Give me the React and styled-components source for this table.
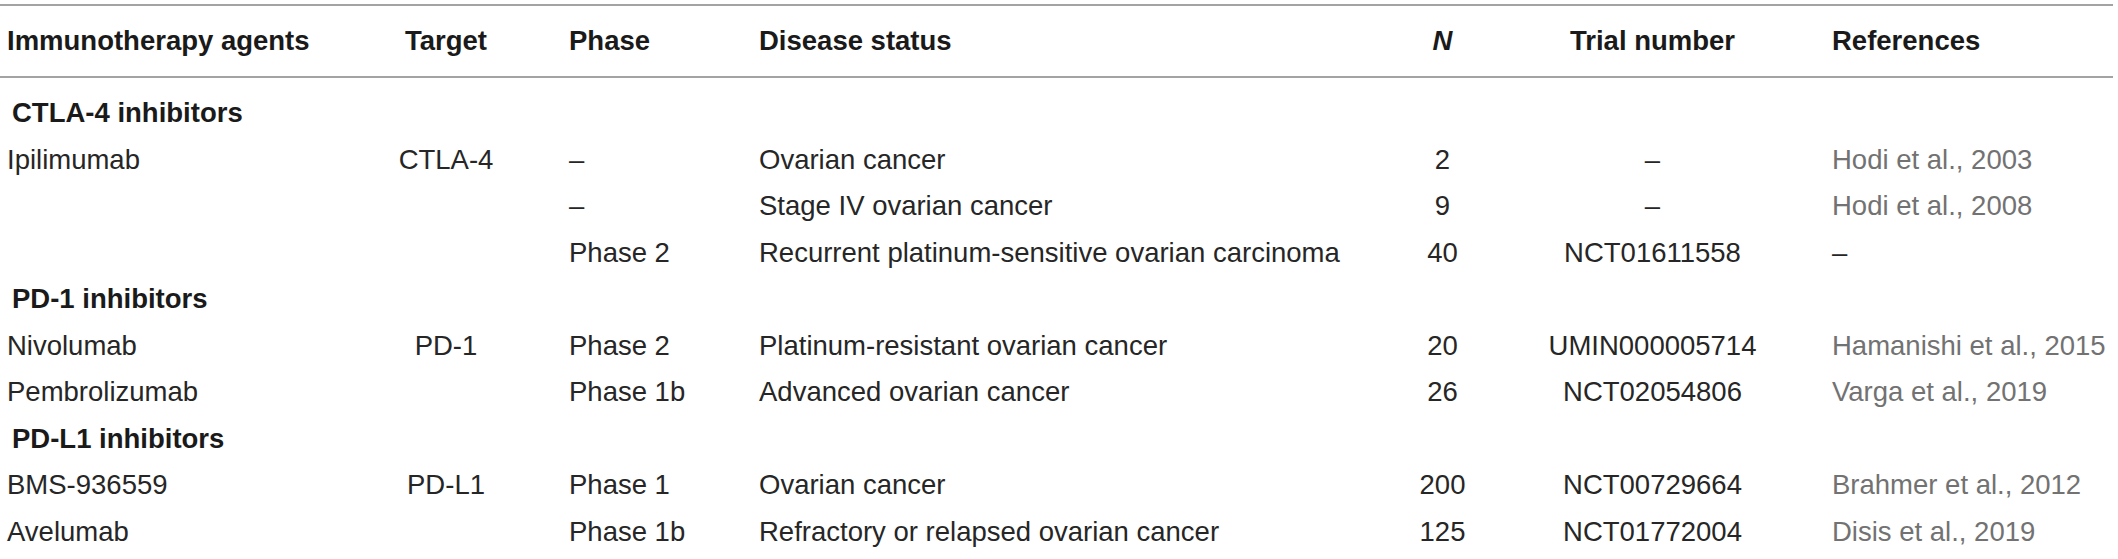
import React from 'react';
import styled, { createGlobalStyle } from 'styled-components';

const GlobalStyle = createGlobalStyle`
  html, body {
    margin: 0;
    padding: 0;
    background: #ffffff;
  }
  body {
    font-family: "Liberation Sans", Arial, Helvetica, sans-serif;
    color: #222222;
  }
`;

const COLUMNS = '330px 232px 190px 628px 125px 295px 1fr';

const Table = styled.div`
  width: 2113px;
  padding-top: 4px;
`;

const HeadRow = styled.div`
  display: grid;
  grid-template-columns: ${COLUMNS};
  align-items: center;
  height: 70px;
  border-top: 2px solid #a3a3a3;
  border-bottom: 2px solid #a3a3a3;
`;

const Body = styled.div`
  padding-top: 12px;
`;

const Row = styled.div`
  display: grid;
  grid-template-columns: ${COLUMNS};
  align-items: center;
  height: 46.5px;
`;

const HeadCell = styled.div`
  font-size: 27.5px;
  font-weight: 700;
  color: #1a1a1a;
  white-space: nowrap;
  text-align: ${p => (p.$center ? 'center' : 'left')};
  padding-left: ${p => (p.$center ? '0' : p.$indent || '7px')};
  font-style: ${p => (p.$italic ? 'italic' : 'normal')};
`;

const Cell = styled.div`
  font-size: 27.5px;
  font-weight: 400;
  white-space: nowrap;
  color: ${p => (p.$muted ? '#727272' : '#262626')};
  text-align: ${p => (p.$center ? 'center' : 'left')};
  padding-left: ${p => (p.$center ? '0' : p.$indent || '7px')};
`;

const SectionLabel = styled.div`
  grid-column: 1 / -1;
  font-size: 27.5px;
  font-weight: 700;
  color: #1a1a1a;
  padding-left: 12px;
`;

const sections = [
  {
    title: 'CTLA-4 inhibitors',
    rows: [
      ['Ipilimumab', 'CTLA-4', '–', 'Ovarian cancer', '2', '–', 'Hodi et al., 2003'],
      ['', '', '–', 'Stage IV ovarian cancer', '9', '–', 'Hodi et al., 2008'],
      ['', '', 'Phase 2', 'Recurrent platinum-sensitive ovarian carcinoma', '40', 'NCT01611558', '–'],
    ],
  },
  {
    title: 'PD-1 inhibitors',
    rows: [
      ['Nivolumab', 'PD-1', 'Phase 2', 'Platinum-resistant ovarian cancer', '20', 'UMIN000005714', 'Hamanishi et al., 2015'],
      ['Pembrolizumab', '', 'Phase 1b', 'Advanced ovarian cancer', '26', 'NCT02054806', 'Varga et al., 2019'],
    ],
  },
  {
    title: 'PD-L1 inhibitors',
    rows: [
      ['BMS-936559', 'PD-L1', 'Phase 1', 'Ovarian cancer', '200', 'NCT00729664', 'Brahmer et al., 2012'],
      ['Avelumab', '', 'Phase 1b', 'Refractory or relapsed ovarian cancer', '125', 'NCT01772004', 'Disis et al., 2019'],
    ],
  },
];

const App = () => {
  return (
    <>
      <GlobalStyle />
      <Table>
        <HeadRow>
          <HeadCell>Immunotherapy agents</HeadCell>
          <HeadCell $center>Target</HeadCell>
          <HeadCell>Phase</HeadCell>
          <HeadCell>Disease status</HeadCell>
          <HeadCell $center $italic>N</HeadCell>
          <HeadCell $center>Trial number</HeadCell>
          <HeadCell $indent="32px">References</HeadCell>
        </HeadRow>
        <Body>
          {sections.map(section => (
            <React.Fragment key={section.title}>
              <Row>
                <SectionLabel>{section.title}</SectionLabel>
              </Row>
              {section.rows.map((r, i) => (
                <Row key={i}>
                  <Cell>{r[0]}</Cell>
                  <Cell $center>{r[1]}</Cell>
                  <Cell>{r[2]}</Cell>
                  <Cell>{r[3]}</Cell>
                  <Cell $center>{r[4]}</Cell>
                  <Cell $center>{r[5]}</Cell>
                  {/* a missing reference is a plain dash, not a grey citation */}
                  <Cell $indent="32px" $muted={r[6] !== '–'}>{r[6]}</Cell>
                </Row>
              ))}
            </React.Fragment>
          ))}
        </Body>
      </Table>
    </>
  );
};

export default App;
